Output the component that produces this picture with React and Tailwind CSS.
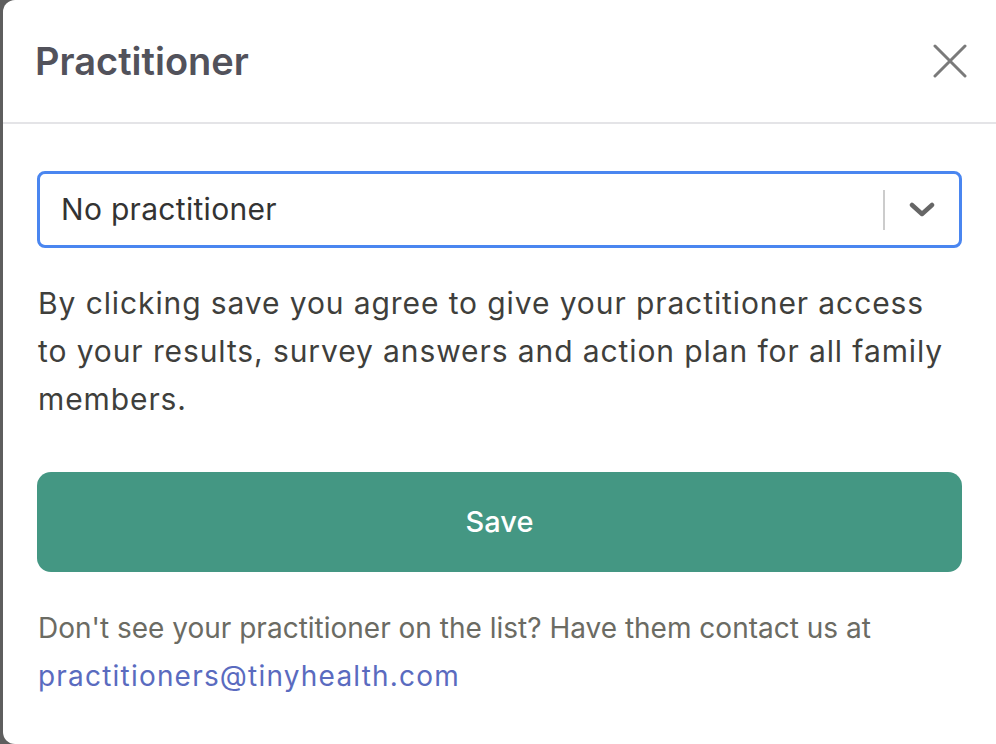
import React from "react";

export default function App() {
  return (
    <div className="w-[996px] h-[744px] bg-[#5e5e5e] flex overflow-hidden" style={{ fontFamily: 'Inter, "Noto Sans", sans-serif' }}>
      <div className="ml-[3px] flex-1 bg-white rounded-l-[12px] flex flex-col">
        <div className="h-[124px] border-b-2 border-[#e4e4e7] pl-[32px] pr-[28px] flex items-center justify-between">
          <h1 className="text-[38px] font-semibold text-[#52525b] leading-none">Practitioner</h1>
          <button className="w-[36px] h-[36px] flex items-center justify-center text-[#7a7a7a]">
            <svg width="34" height="34" viewBox="0 0 34 34" fill="none" stroke="currentColor" strokeWidth="3" strokeLinecap="round">
              <path d="M2 2L32 32M32 2L2 32" />
            </svg>
          </button>
        </div>
        <div className="px-[34px] pt-[47px] flex flex-col">
          <div className="h-[77px] border-[3px] border-[#4a86f0] rounded-[8px] flex items-center">
            <div className="flex-1 pl-[21px] text-[30px] tracking-[0.3px] text-[#333333]">No practitioner</div>
            <div className="w-[2px] h-[40px] bg-[#cccccc]" />
            <div className="w-[74px] flex items-center justify-center text-[#666666]">
              <svg width="26" height="16" viewBox="0 0 26 16" fill="none" stroke="currentColor" strokeWidth="4.5" strokeLinecap="round" strokeLinejoin="round">
                <path d="M3 3L13 12L23 3" />
              </svg>
            </div>
          </div>
          <p className="mt-[31px] pl-[1px] pr-[15px] text-[30px] tracking-[0.9px] leading-[48px] text-[#3f3f3c]">
            By clicking save you agree to give your practitioner access to your results, survey answers and action plan for all family members.
          </p>
          <button className="mt-[49px] h-[100px] rounded-[14px] bg-[#449783] text-white text-[29px] font-medium">Save</button>
          <p className="mt-[32px] pl-[1px] text-[28px] leading-[48px] text-[#6b6b63]">
            Don't see your practitioner on the list? Have them contact us at{" "}
            <a className="text-[#5a6bbf] tracking-[1.2px]">practitioners@tinyhealth.com</a>
          </p>
        </div>
      </div>
    </div>
  );
}
